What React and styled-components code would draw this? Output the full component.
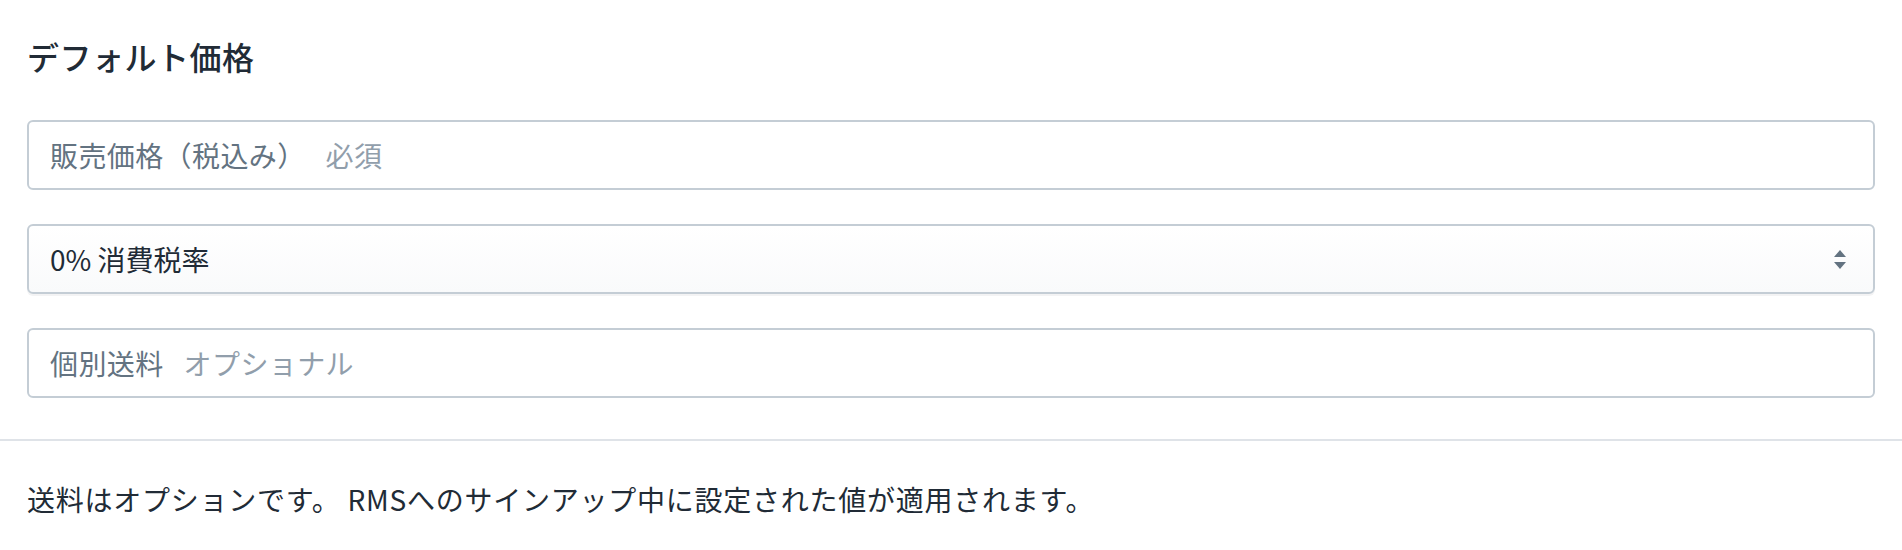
import React from "react";
import styled, { createGlobalStyle } from "styled-components";

const GlobalStyle = createGlobalStyle`
  html, body {
    margin: 0;
    padding: 0;
    background: #ffffff;
  }
  body {
    font-family: "Noto Sans CJK JP", "Noto Sans", sans-serif;
    color: #212b36;
    -webkit-font-smoothing: antialiased;
  }
  * { box-sizing: border-box; }
`;

const Card = styled.div`
  width: 1902px;
  background: #ffffff;
`;

const Section = styled.section`
  padding: ${(p) => (p.$footer ? "38px 27px 30px" : "32px 27px 41px")};
  border-top: ${(p) => (p.$footer ? "2px solid #dfe3e8" : "none")};
`;

const Heading = styled.h2`
  margin: 0 0 40px;
  font-size: 32px;
  line-height: 48px;
  font-weight: 500;
  letter-spacing: 0.5px;
  color: #212b36;
`;

const FieldStack = styled.div`
  display: flex;
  flex-direction: column;
  gap: 34px;
`;

const FieldBox = styled.label`
  position: relative;
  display: flex;
  align-items: center;
  height: 70px;
  padding: 0 21px;
  border: 2px solid #c4cdd5;
  border-radius: 6px;
  background: ${(p) =>
    p.$select ? "linear-gradient(180deg, #ffffff, #f9fafb)" : "#ffffff"};
  box-shadow: ${(p) =>
    p.$select ? "0 2px 0 0 rgba(22, 29, 37, 0.05)" : "none"};
  font-size: 28px;
  letter-spacing: 0.4px;
`;

const Prefix = styled.span`
  flex: none;
  color: #637381;
  margin-right: 20px;
  line-height: 40px;
`;

const Input = styled.input`
  flex: 1;
  min-width: 0;
  border: none;
  outline: none;
  background: transparent;
  padding: 0;
  font-family: inherit;
  font-size: 28px;
  letter-spacing: 0.4px;
  line-height: 40px;
  color: #212b36;
  &::placeholder {
    color: #919eab;
  }
`;

const SelectedText = styled.span`
  flex: 1;
  color: #212b36;
  line-height: 40px;
  letter-spacing: 0;
`;

const NativeSelect = styled.select`
  position: absolute;
  inset: 0;
  width: 100%;
  opacity: 0;
  cursor: pointer;
  font-size: 28px;
`;

const Arrows = styled.svg`
  flex: none;
  width: 12px;
  height: 20px;
  margin-right: 6px;
  fill: #637381;
`;

const Note = styled.p`
  margin: 0;
  font-size: 28px;
  line-height: 40px;
  letter-spacing: 0.75px;
  color: #212b36;
`;

function TextField({ prefix, placeholder }) {
  return (
    <FieldBox>
      <Prefix>{prefix}</Prefix>
      <Input type="text" placeholder={placeholder} />
    </FieldBox>
  );
}

function Select({ value, options }) {
  return (
    <FieldBox $select>
      <SelectedText>{value}</SelectedText>
      <Arrows viewBox="0 0 12 20" aria-hidden="true">
        <polygon points="0,8 6,1 12,8" />
        <polygon points="0,13 12,13 6,20" />
      </Arrows>
      <NativeSelect defaultValue={value}>
        {options.map((o) => (
          <option key={o} value={o}>
            {o}
          </option>
        ))}
      </NativeSelect>
    </FieldBox>
  );
}

export default function App() {
  return (
    <>
      <GlobalStyle />
      <Card>
        <Section>
          <Heading>デフォルト価格</Heading>
          <FieldStack>
            <TextField prefix="販売価格（税込み）" placeholder="必須" />
            <Select
              value="0% 消費税率"
              options={["0% 消費税率", "8% 消費税率", "10% 消費税率"]}
            />
            <TextField prefix="個別送料" placeholder="オプショナル" />
          </FieldStack>
        </Section>
        <Section $footer>
          <Note>
            送料はオプションです。 RMSへのサインアップ中に設定された値が適用されます。
          </Note>
        </Section>
      </Card>
    </>
  );
}
